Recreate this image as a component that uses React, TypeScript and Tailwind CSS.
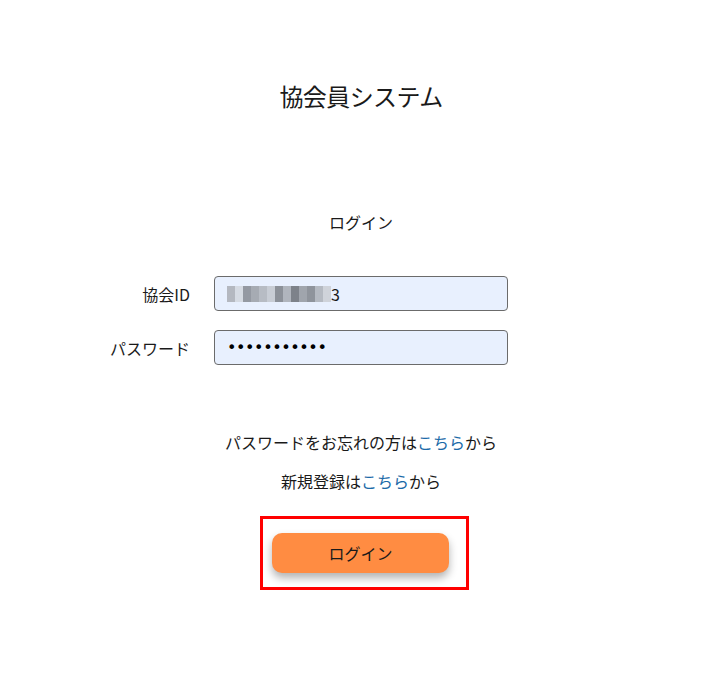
const font = { fontFamily: '"Noto Sans CJK JP", "Noto Sans", sans-serif' };

const blurShades = [
  "bg-[#b4b8c0]",
  "bg-[#d6dbe3]",
  "bg-[#9499a2]",
  "bg-[#a6abb3]",
  "bg-[#b7bcc4]",
  "bg-[#c8cdd5]",
  "bg-[#8c9199]",
  "bg-[#b0b5bd]",
  "bg-[#7d828a]",
  "bg-[#a0a5ad]",
  "bg-[#8f949c]",
  "bg-[#b5bac2]",
  "bg-[#cfd3da]",
];

function Field({ label, children }: { label: string; children: React.ReactNode }) {
  return (
    <div className="grid grid-cols-[1fr_294px_1fr] items-center">
      <label className="pr-6 text-right text-[16px] text-[#1a1a1a]">{label}</label>
      <div className="flex h-[35px] items-center rounded-[4px] border border-[#6b6b6b] bg-[#e8f0fe] px-3">
        {children}
      </div>
      <div />
    </div>
  );
}

export default function App() {
  return (
    <div className="min-h-[677px] bg-white pl-[17px] text-[#1a1a1a]" style={font}>
      <div className="flex flex-col items-center">
        <h1 className="mt-[81px] text-[24px] leading-[30px] tracking-[-0.6px]">協会員システム</h1>

        <p className="mt-[100px] text-[16px] leading-[22px]">ログイン</p>

        <div className="mt-[43px] flex w-full flex-col gap-[19px]">
          <Field label="協会ID">
            <div className="flex items-center">
              <div className="flex h-[16px]">
                {blurShades.map((c, i) => (
                  <span key={i} className={`h-full w-[8px] ${c}`} />
                ))}
              </div>
              <span className="text-[16px] leading-none">3</span>
            </div>
          </Field>
          <Field label="パスワード">
            <span className="font-['DejaVu_Sans'] text-[16px] leading-none tracking-[-0.4px] text-black">
              •••••••••••
            </span>
          </Field>
        </div>

        <p className="mt-[66px] text-[16px] leading-[22px]">
          パスワードをお忘れの方は<a className="text-[#1b6aa8]">こちら</a>から
        </p>
        <p className="mt-[17px] text-[16px] leading-[22px]">
          新規登録は<a className="text-[#1b6aa8]">こちら</a>から
        </p>

        <div className="ml-[7px] mt-[24px] border-[3px] border-[#ff0000] pl-[9px] pr-[17px] pt-[14px] pb-[14px]">
          <button className="h-[40px] w-[177px] rounded-[10px] bg-[#ff8c42] text-[16px] text-[#1a1a1a] shadow-[0_5px_8px_rgba(0,0,0,0.3)]">
            ログイン
          </button>
        </div>
      </div>
    </div>
  );
}
